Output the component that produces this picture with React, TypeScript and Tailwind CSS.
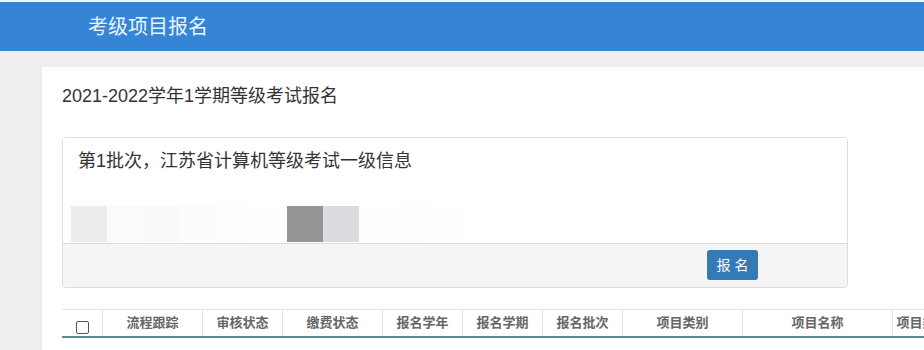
import React from "react";

const cols: { label: string; w: number }[] = [
  { label: "流程跟踪", w: 100 },
  { label: "审核状态", w: 80 },
  { label: "缴费状态", w: 100 },
  { label: "报名学年", w: 80 },
  { label: "报名学期", w: 80 },
  { label: "报名批次", w: 80 },
  { label: "项目类别", w: 120 },
  { label: "项目名称", w: 150 },
  { label: "项目类型", w: 60 },
];

const mosaic = [
  "#ececec",
  "#fbfbfb",
  "#f9f9f7",
  "#fcfcfc",
  "#fdfdfd",
  "#fefefe",
  "#939597",
  "#d9dbde",
  "#fdfefe",
  "#fcfdfc",
  "#fefefe",
];

export default function App() {
  return (
    <div
      className="w-[924px] h-[350px] overflow-hidden bg-[#eeeeee] flex flex-col"
      style={{ fontFamily: '"Liberation Sans", "Noto Sans CJK SC", sans-serif' }}
    >
      <div className="h-[2px] bg-[#f4f4f4] shrink-0" />
      <div className="h-[49px] bg-[#3584d6] shrink-0 flex items-center pl-[88px]">
        <span className="text-[20px] text-[#e8f4ff] leading-none">考级项目报名</span>
      </div>
      <div className="pt-[16px] pl-[42px] flex-1 flex">
        <div className="bg-white flex-1 pl-[20px] pt-[18px] flex flex-col">
          <div className="text-[18px] text-[#333] leading-[22px]">2021-2022学年1学期等级考试报名</div>
          <div className="mt-[30px] w-[786px] border border-[#dddddd] rounded-[4px] flex flex-col overflow-hidden">
            <div className="h-[105px] bg-white flex flex-col pl-[15px] pt-[12px]">
              <div className="text-[18px] text-[#333] leading-[22px]">第1批次，江苏省计算机等级考试一级信息</div>
              <div className="mt-[34px] ml-[-7px] flex">
                {mosaic.map((c, i) => (
                  <div key={i} className="w-[36px] h-[36px]" style={{ backgroundColor: c }} />
                ))}
              </div>
            </div>
            <div className="h-[44px] bg-[#f5f5f5] border-t border-[#dddddd] flex justify-end items-start pt-[6px] pr-[89px]">
              <button className="w-[51px] h-[30px] bg-[#337ab7] rounded-[3px] text-white text-[14px] tracking-[4px] pl-[4px] flex items-center justify-center">
                报名
              </button>
            </div>
          </div>
          <div className="mt-[21px] flex border-t border-[#e3e3e3] border-b-2 border-b-[#5f8e90] h-[29px]">
            <div className="w-[41px] shrink-0 border-r border-[#e3e3e3] flex items-end justify-center pb-[2px]">
              <div className="w-[13px] h-[13px] border border-[#555] rounded-[2px] bg-white" />
            </div>
            {cols.map((c) => (
              <div
                key={c.label}
                className="shrink-0 border-r border-[#e3e3e3] flex items-center justify-center text-[13px] font-bold text-[#666] whitespace-nowrap"
                style={{ width: c.w }}
              >
                {c.label}
              </div>
            ))}
          </div>
        </div>
      </div>
    </div>
  );
}
